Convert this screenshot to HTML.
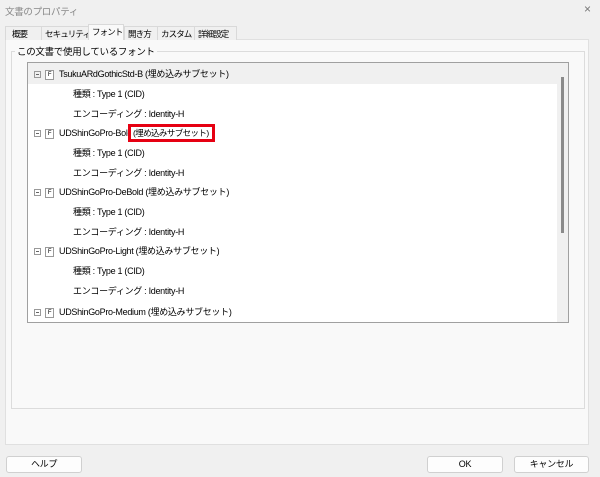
<!DOCTYPE html>
<html><head><meta charset="utf-8"><style>
*{margin:0;padding:0;box-sizing:border-box}
body{width:600px;height:477px;background:#f0f0f0;font-family:"Liberation Sans","Noto Sans CJK JP",sans-serif;font-size:9px;color:#000;position:relative;overflow:hidden;letter-spacing:-0.3px}
.a{position:absolute;white-space:nowrap}
.tab{position:absolute;top:26px;height:14px;border:1px solid #d9d9d9;border-bottom:none;border-right:none;background:#f0f0f0;padding:1px 0 0 3px;font-size:8.5px;white-space:nowrap;letter-spacing:-0.9px;overflow:hidden}
.row{position:absolute;left:0;height:20px;line-height:20px;white-space:nowrap}
.btn{position:absolute;top:456px;height:17px;background:#fdfdfd;border:1px solid #d0d0d0;border-radius:3px;text-align:center;line-height:15px;font-size:9px}
.ic{display:inline-block;width:9px;height:10px;border:1px solid #999;font-size:6px;line-height:8px;text-align:center;vertical-align:middle;background:#fff;margin-right:5px}
.mn{display:inline-block;width:7px;height:7px;border:1px solid #999;vertical-align:middle;margin-right:4px;position:relative}
.mn:after{content:"";position:absolute;left:1px;top:2px;width:3px;height:1px;background:#666}
</style></head><body>
<div class="a" style="left:5px;top:4px;color:#888;font-size:9.5px">文書のプロパティ</div>
<div class="a" style="left:584px;top:2px;color:#777;font-size:12px">×</div>
<div class="a" style="left:5px;top:39px;width:584px;height:406px;background:#f9f9f9;border:1px solid #e0e0e0"></div>
<div class="tab" style="left:5px;width:36px;padding-left:6px">概要</div>
<div class="tab" style="left:41px;width:47px">セキュリティ</div>
<div class="tab" style="left:88px;width:36px;top:24px;height:16px;background:#f9f9f9;z-index:2;border-right:1px solid #d9d9d9">フォント</div>
<div class="tab" style="left:124px;width:33px">開き方</div>
<div class="tab" style="left:157px;width:37px">カスタム</div>
<div class="tab" style="left:194px;width:43px;border-right:1px solid #d9d9d9">詳細設定</div>
<div class="a" style="left:11px;top:51px;width:574px;height:358px;border:1px solid #dcdcdc"></div>
<div class="a" style="left:15px;top:44px;background:#f9f9f9;padding:0 2px;font-size:9.5px">この文書で使用しているフォント</div>
<div class="a" style="left:27px;top:62px;width:542px;height:261px;border:1px solid #a0a0a0;background:#fff;overflow:hidden">
 <div class="a" style="left:0;top:0;width:529px;height:21px;background:#f0f0f0"></div>
 <div class="a" style="left:529px;top:0;width:12px;height:260px;background:#f0f0f0"></div>
 <div class="a" style="left:533px;top:14px;width:3px;height:156px;background:#8a8a8a"></div>
 <div class="row" style="top:1px;left:6px"><span class="mn"></span><span class="ic">F</span>TsukuARdGothicStd-B (埋め込みサブセット)</div>
 <div class="row" style="top:21px;left:45px">種類 : Type 1 (CID)</div>
 <div class="row" style="top:41px;left:45px">エンコーディング : Identity-H</div>
 <div class="row" style="top:60px;left:6px"><span class="mn"></span><span class="ic">F</span>UDShinGoPro-Bold</div>
 <div class="row" style="top:80px;left:45px">種類 : Type 1 (CID)</div>
 <div class="row" style="top:100px;left:45px">エンコーディング : Identity-H</div>
 <div class="row" style="top:119px;left:6px"><span class="mn"></span><span class="ic">F</span>UDShinGoPro-DeBold (埋め込みサブセット)</div>
 <div class="row" style="top:139px;left:45px">種類 : Type 1 (CID)</div>
 <div class="row" style="top:159px;left:45px">エンコーディング : Identity-H</div>
 <div class="row" style="top:178px;left:6px"><span class="mn"></span><span class="ic">F</span>UDShinGoPro-Light (埋め込みサブセット)</div>
 <div class="row" style="top:198px;left:45px">種類 : Type 1 (CID)</div>
 <div class="row" style="top:218px;left:45px">エンコーディング : Identity-H</div>
 <div class="row" style="top:239px;left:6px"><span class="mn"></span><span class="ic">F</span>UDShinGoPro-Medium (埋め込みサブセット)</div>
</div>
<div class="a" style="left:128px;top:124px;width:87px;height:18px;border:3px solid #e60012;background:#fff;font-size:8.5px;letter-spacing:-0.6px;line-height:12px;padding-left:2px;overflow:hidden">(埋め込みサブセット)</div>
<div class="btn" style="left:6px;width:76px">ヘルプ</div>
<div class="btn" style="left:427px;width:76px">OK</div>
<div class="btn" style="left:514px;width:75px">キャンセル</div>
</body></html>
